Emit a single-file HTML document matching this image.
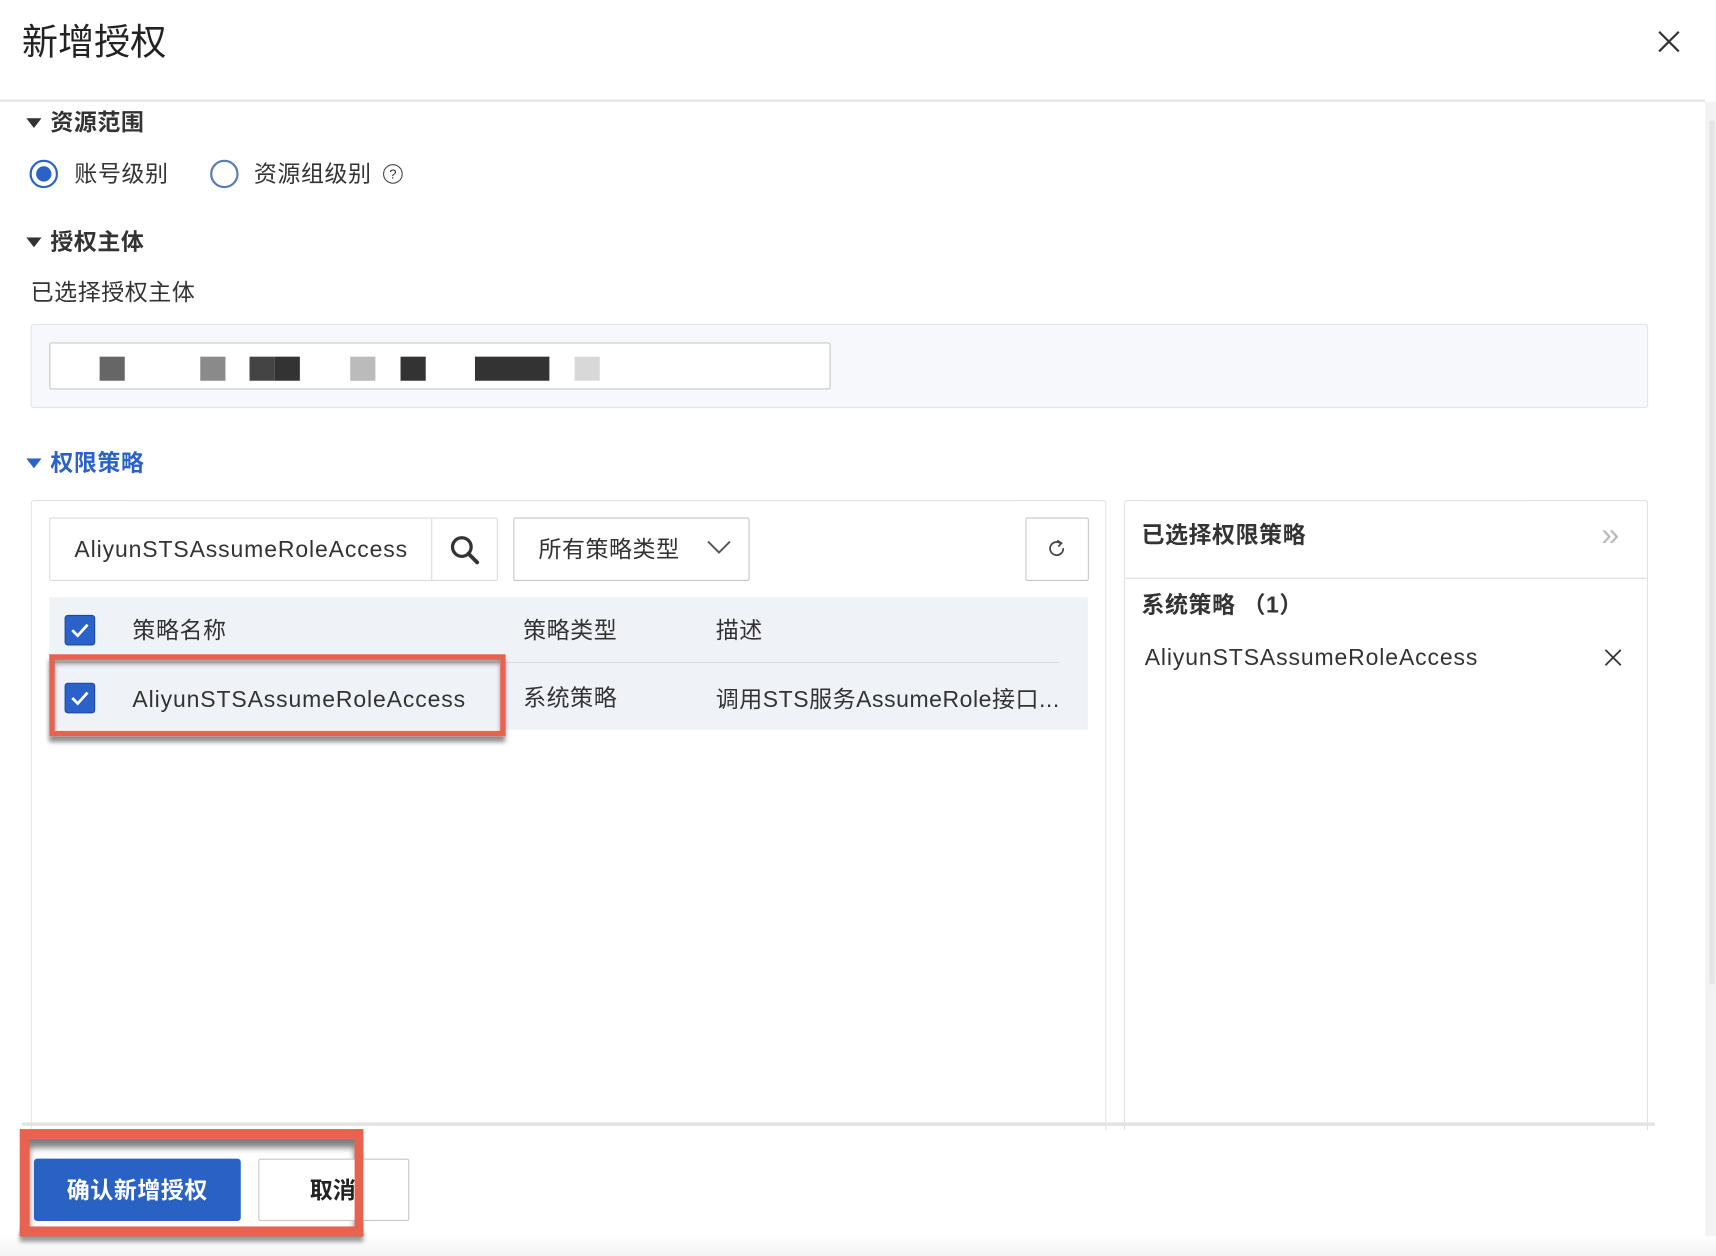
<!DOCTYPE html>
<html><head><meta charset="utf-8"><style>
html,body{margin:0;padding:0;background:#fff;overflow:hidden;width:1716px;height:1256px}
#w{position:absolute;left:0;top:0;width:1568px;height:1148px;transform:scale(1.09439,1.09408);transform-origin:0 0;font-family:"Liberation Sans","Noto Sans CJK SC",sans-serif;color:#333}
.a{position:absolute}
.t{position:absolute;white-space:nowrap;line-height:1}
.b{font-weight:bold}
.l{letter-spacing:0.8px}
.cb{position:absolute;width:26px;height:26px;background:#2a62c9;border-radius:3px;border:1px solid #1d4a9e}
</style></head><body><div id="w">
<div class="t" style="left:20px;top:22px;font-size:33px;color:#222">新增授权</div>
<svg class="a" style="left:1514px;top:27px" width="22" height="22"><path d="M2 2L20 20M20 2L2 20" stroke="#333" stroke-width="2"/></svg>
<div class="a" style="left:0;top:91px;width:1558px;height:2px;background:#e3e3e3"></div>
<div class="a" style="left:1558px;top:93px;width:10px;height:1055px;background:#f3f3f3"></div>
<div class="a" style="left:1562px;top:110px;width:5px;height:790px;background:#e4e4e4;border-radius:3px"></div>

<svg class="a" style="left:24px;top:108px" width="14" height="10"><path d="M0 0H14L7 9Z" fill="#333"/></svg>
<div class="t b" style="left:46px;top:102px;font-size:21px;letter-spacing:0.5px">资源范围</div>
<div class="a" style="left:27px;top:146px;width:22px;height:22px;border:2px solid #2a62c9;border-radius:50%"></div>
<div class="a" style="left:33px;top:152px;width:14px;height:14px;background:#2a62c9;border-radius:50%"></div>
<div class="t" style="left:68px;top:149px;font-size:21px;letter-spacing:0.5px">账号级别</div>
<div class="a" style="left:192px;top:146px;width:22px;height:22px;border:2px solid #5a7ab5;border-radius:50%"></div>
<div class="t" style="left:232px;top:149px;font-size:21px;letter-spacing:0.5px">资源组级别</div>
<div class="a" style="left:350px;top:150px;width:16px;height:16px;border:1.5px solid #444;border-radius:50%;font-size:12px;text-align:center;line-height:16px">?</div>

<svg class="a" style="left:24px;top:217px" width="14" height="10"><path d="M0 0H14L7 9Z" fill="#333"/></svg>
<div class="t b" style="left:46px;top:211px;font-size:21px;letter-spacing:0.5px">授权主体</div>
<div class="t" style="left:28px;top:257px;font-size:21px;letter-spacing:0.5px">已选择授权主体</div>
<div class="a" style="left:28px;top:296px;width:1476px;height:75px;background:#f7f8fb;border:1px solid #e3e4e8;border-radius:3px"></div>
<div class="a" style="left:45px;top:313px;width:712px;height:41px;background:#fff;border:1px solid #c4c6cc;border-radius:2px"></div>
<div class="a" style="left:91px;top:326px;width:23px;height:22px;background:#666"></div>
<div class="a" style="left:183px;top:326px;width:23px;height:22px;background:#8a8a8a"></div>
<div class="a" style="left:228px;top:326px;width:23px;height:22px;background:#444"></div>
<div class="a" style="left:251px;top:326px;width:23px;height:22px;background:#333"></div>
<div class="a" style="left:320px;top:326px;width:23px;height:22px;background:#bbb"></div>
<div class="a" style="left:366px;top:326px;width:23px;height:22px;background:#333"></div>
<div class="a" style="left:434px;top:326px;width:68px;height:22px;background:#333"></div>
<div class="a" style="left:525px;top:326px;width:23px;height:22px;background:#d8d8d8"></div>

<svg class="a" style="left:24px;top:419px" width="14" height="10"><path d="M0 0H14L7 9Z" fill="#2a62c9"/></svg>
<div class="t b" style="left:46px;top:413px;font-size:21px;color:#2a62c9;letter-spacing:0.5px">权限策略</div>

<div class="a" style="left:28px;top:457px;width:981px;height:575px;border:1px solid #e0e0e0;border-bottom:none;border-radius:3px 3px 0 0"></div>
<div class="a" style="left:1027px;top:457px;width:477px;height:575px;border:1px solid #e0e0e0;border-bottom:none;border-radius:3px 3px 0 0"></div>

<div class="a" style="left:45px;top:473px;width:408px;height:56px;border:1px solid #dcdcdc;border-radius:2px"></div>
<div class="a" style="left:394px;top:474px;width:1px;height:56px;background:#dcdcdc"></div>
<div class="t l" style="left:68px;top:492px;font-size:21px">AliyunSTSAssumeRoleAccess</div>
<svg class="a" style="left:410px;top:488px" width="30" height="30"><circle cx="12" cy="12" r="8.5" stroke="#333" stroke-width="3" fill="none"/><path d="M18 18L26 26" stroke="#333" stroke-width="3.5" stroke-linecap="round"/></svg>
<div class="a" style="left:469px;top:473px;width:214px;height:56px;border:1px solid #c4c6cc;border-radius:2px"></div>
<div class="t" style="left:492px;top:492px;font-size:21px;letter-spacing:0.5px">所有策略类型</div>
<svg class="a" style="left:646px;top:494px" width="22" height="14"><path d="M1 1L11 11L21 1" stroke="#555" stroke-width="1.8" fill="none"/></svg>
<div class="a" style="left:937px;top:473px;width:56px;height:56px;border:1px solid #c4c6cc;border-radius:2px"></div>
<svg class="a" style="left:956px;top:492px" width="20" height="20"><path d="M13 4.5A6 6 0 1 0 15.5 9" stroke="#444" stroke-width="1.6" fill="none"/><path d="M10 2L14 4.5L11 7.5" stroke="#444" stroke-width="1.5" fill="none"/></svg>

<div class="a" style="left:45px;top:546px;width:949px;height:121px;background:#eff2f7"></div>
<div class="a" style="left:45px;top:605px;width:923px;height:1px;background:#d8dbe0"></div>
<div class="cb" style="left:59px;top:562px"></div>
<svg class="a" style="left:62px;top:566px" width="22" height="20"><path d="M4 10L9 15L18 5" stroke="#fff" stroke-width="2.5" fill="none"/></svg>
<div class="t" style="left:121px;top:566px;font-size:21px;letter-spacing:0.5px">策略名称</div>
<div class="t" style="left:478px;top:566px;font-size:21px;letter-spacing:0.5px">策略类型</div>
<div class="t" style="left:654px;top:566px;font-size:21px;letter-spacing:0.5px">描述</div>
<div class="cb" style="left:59px;top:624px"></div>
<svg class="a" style="left:62px;top:628px" width="22" height="20"><path d="M4 10L9 15L18 5" stroke="#fff" stroke-width="2.5" fill="none"/></svg>
<div class="t l" style="left:121px;top:629px;font-size:21px">AliyunSTSAssumeRoleAccess</div>
<div class="t" style="left:478px;top:628px;font-size:21px;letter-spacing:0.5px">系统策略</div>
<div class="t" style="left:654px;top:629px;font-size:21px;letter-spacing:0.5px">调用STS服务AssumeRole接口...</div>
<div class="a" style="left:45px;top:598px;width:407px;height:65px;border:5px solid #e8634f;box-shadow:0 5px 4px rgba(0,0,0,.45), inset 0 4px 4px rgba(0,0,0,.35)"></div>

<div class="t b" style="left:1043px;top:479px;font-size:21px;letter-spacing:0.5px">已选择权限策略</div>
<div class="t" style="left:1463px;top:474px;font-size:30px;color:#bbb">»</div>
<div class="a" style="left:1028px;top:528px;width:477px;height:1px;background:#dcdcdc"></div>
<div class="t b" style="left:1043px;top:543px;font-size:21px;letter-spacing:0.5px">系统策略 （1）</div>
<div class="t l" style="left:1046px;top:591px;font-size:21px">AliyunSTSAssumeRoleAccess</div>
<svg class="a" style="left:1466px;top:593px" width="16" height="16"><path d="M1 1L15 15M15 1L1 15" stroke="#333" stroke-width="1.6"/></svg>

<div class="a" style="left:20px;top:1026px;width:1492px;height:3px;background:#e2e2e2"></div>
<div class="a" style="left:0;top:1130px;width:1568px;height:18px;background:linear-gradient(#fff,#f2f2f2)"></div>
<div class="a" style="left:18px;top:1032px;width:314px;height:98px;background:#e8634f"></div>
<div class="a" style="left:27px;top:1041px;width:297px;height:80px;background:#fff;box-shadow:inset 0 8px 6px rgba(0,0,0,.5)"></div>
<div class="a" style="left:31px;top:1059px;width:189px;height:57px;background:#2a62c4;border-radius:3px"></div>
<div class="t b" style="left:61px;top:1078px;font-size:21px;color:#fff;letter-spacing:0.5px">确认新增授权</div>
<div class="a" style="left:236px;top:1059px;width:136px;height:55px;border:1px solid #c4c6cc;border-radius:2px;background:#fff"></div>
<div class="t b" style="left:283px;top:1078px;font-size:21px;color:#222">取消</div>
<div class="a" style="left:324px;top:1032px;width:8px;height:98px;background:#e8634f"></div>
<div class="a" style="left:18px;top:1121px;width:314px;height:9px;background:#e8634f;box-shadow:0 5px 4px rgba(0,0,0,.4)"></div>
</div></body></html>
